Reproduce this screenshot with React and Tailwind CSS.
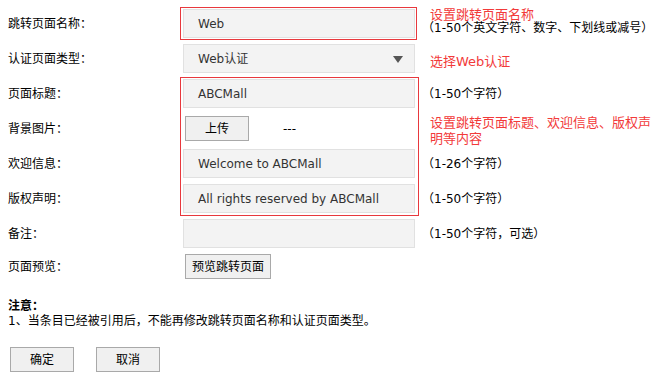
import React from 'react';

const font = { fontFamily: '"DejaVu Sans", "Noto Sans CJK SC", sans-serif' };

function Field({ value, children }) {
  return (
    <div className="w-[232px] h-[29px] bg-[#f3f3f3] border border-[#e1e1e1] flex items-center pl-[14px] text-[12px] text-[#333] relative">
      {value}
      {children}
    </div>
  );
}

function Btn({ label, className = '' }) {
  return (
    <button className={`h-[25px] border border-[#a9a9a9] bg-[#f0f0f0] text-[12px] text-black flex items-center justify-center shrink-0 ${className}`}>
      {label}
    </button>
  );
}

function Row({ label, children, hint, h = 'h-[29px]' }) {
  return (
    <div className={`flex items-center ${h} mb-[6px]`}>
      <div className="w-[183px] shrink-0 pl-[8px] text-[12px] text-black">{label}</div>
      <div className="w-[232px] shrink-0 flex items-center">{children}</div>
      <div className="ml-[15px] flex">{hint}</div>
    </div>
  );
}

const gray = (t) => <span className="text-[12px] text-black -ml-[8px]">{t}</span>;

export default function App() {
  return (
    <div className="w-[658px] h-[382px] bg-white relative overflow-hidden" style={font}>
      <div className="pt-[9px] flex flex-col">
        <Row
          label="跳转页面名称："
          hint={
            <div className="self-start -mt-[4px] flex flex-col">
              <span className="text-[13px] leading-[13px] text-[#f23a3a]">设置跳转页面名称</span>
              <span className="text-[12px] leading-[13px] text-black -ml-[8px] mt-[1px] whitespace-nowrap">（1-50个英文字符、数字、下划线或减号）</span>
            </div>
          }
        >
          <Field value="Web" />
        </Row>
        <Row label="认证页面类型：" hint={<span className="text-[13px] text-[#f23a3a] mt-[6px]">选择Web认证</span>}>
          <Field value="Web认证">
            <span className="absolute right-[11px] top-[11px] w-0 h-0 border-l-[5px] border-r-[5px] border-t-[7px] border-l-transparent border-r-transparent border-t-[#555]" />
          </Field>
        </Row>
        <Row label="页面标题：" hint={gray('（1-50个字符）')}>
          <Field value="ABCMall" />
        </Row>
        <Row
          label="背景图片："
          hint={
            <div className="self-start mt-[5px] w-[222px] text-[13px] leading-[16px] text-[#f23a3a]">
              设置跳转页面标题、欢迎信息、版权声明等内容
            </div>
          }
        >
          <Btn label="上传" className="ml-[2px] w-[64px]" />
          <span className="ml-[34px] text-[12px] text-black">---</span>
        </Row>
        <Row label="欢迎信息：" hint={gray('（1-26个字符）')}>
          <Field value="Welcome to ABCMall" />
        </Row>
        <Row label="版权声明：" hint={gray('（1-50个字符）')}>
          <Field value="All rights reserved by ABCMall" />
        </Row>
        <Row label="备注：" hint={gray('（1-50个字符，可选）')}>
          <Field value="" />
        </Row>
        <Row label="页面预览：" h="h-[25px]">
          <Btn label="预览跳转页面" className="ml-[2px] w-[86px]" />
        </Row>
      </div>

      <div className="pl-[8px] mt-[14px] text-[12px] leading-[15px] text-black">
        <div className="font-bold">注意：</div>
        <div>1、当条目已经被引用后，不能再修改跳转页面名称和认证页面类型。</div>
      </div>

      <div className="flex gap-[22px] pl-[10px] mt-[18px]">
        <Btn label="确定" className="w-[64px] h-[24px]" />
        <Btn label="取消" className="w-[64px] h-[24px]" />
      </div>

      <div className="absolute left-[180px] top-[7px] w-[237px] h-[33px] border border-[#e8383d] pointer-events-none" />
      <div className="absolute left-[180px] top-[77px] w-[239px] h-[139px] border border-[#e8383d] pointer-events-none" />
    </div>
  );
}
